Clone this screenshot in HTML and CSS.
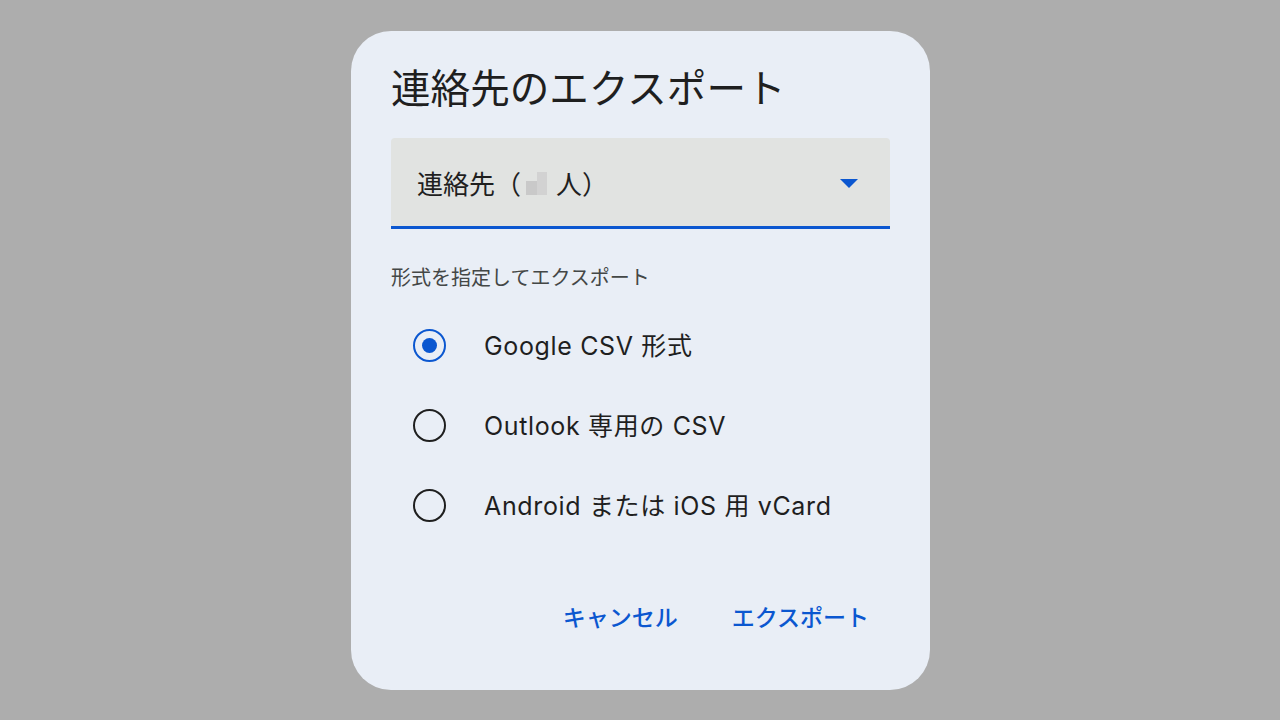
FILE: index.html
```html
<!DOCTYPE html>
<html lang="ja">
<head>
<meta charset="utf-8">
<link rel="stylesheet" href="styles.css">
</head>
<body>
<div class="stage">
  <div class="dialog">
    <h1 class="title">連絡先のエクスポート</h1>
    <div class="select">
      <span class="select-text">連絡先（<span class="redact"><span class="r1"></span><span class="r2"></span></span><span class="after">人）</span></span>
      <svg class="arrow" width="18" height="9" viewBox="0 0 18 9"><path d="M0 0 L18 0 L9 9 Z" fill="#0b57d0"/></svg>
    </div>
    <div class="label">形式を指定してエクスポート</div>
    <div class="options">
      <div class="option">
        <span class="radio checked"><span class="dot"></span></span>
        <span class="opt-text">Google CSV 形式</span>
      </div>
      <div class="option">
        <span class="radio"></span>
        <span class="opt-text">Outlook 専用の CSV</span>
      </div>
      <div class="option">
        <span class="radio"></span>
        <span class="opt-text">Android または iOS 用 vCard</span>
      </div>
    </div>
    <div class="actions">
      <button class="btn">キャンセル</button>
      <button class="btn">エクスポート</button>
    </div>
  </div>
</div>
</body>
</html>
```

FILE: styles.css
```css
html, body {
  margin: 0;
  padding: 0;
  width: 1280px;
  height: 720px;
  background: #adadad;
  font-family: Roboto, "Noto Sans CJK JP", sans-serif;
  overflow: hidden;
}
.stage {
  padding-top: 31px;
  padding-left: 351px;
}
.dialog {
  box-sizing: border-box;
  width: 579px;
  height: 659px;
  background: #e9eef6;
  border-radius: 40px;
  padding: 31px 40px 0 40px;
  display: flex;
  flex-direction: column;
}
.title {
  margin: 0;
  font-size: 39.6px;
  line-height: 56px;
  font-weight: 400;
  color: #1f1f1f;
}
.select {
  margin-top: 20px;
  height: 91px;
  box-sizing: border-box;
  background: #e1e3e1;
  border-bottom: 3px solid #0b57d0;
  border-radius: 4px 4px 0 0;
  display: flex;
  align-items: center;
  justify-content: space-between;
  padding: 0 32px 0 26px;
}
.select-text {
  font-size: 26px;
  color: #1f1f1f;
  display: flex;
  align-items: center;
}
.redact {
  display: inline-flex;
  align-items: flex-end;
  height: 23px;
  margin-left: 5px;
  margin-top: 2px;
}
.r1 {
  width: 11px;
  height: 14px;
  background: #c9c9c9;
}
.r2 {
  width: 10px;
  height: 23px;
  background: #d2d2d2;
}
.after {
  margin-left: 9px;
}
.arrow {
  display: block;
  margin-top: 3px;
}
.label {
  margin-top: 35px;
  font-size: 20px;
  line-height: 28px;
  color: #444746;
}
.options {
  margin-top: 13px;
  display: flex;
  flex-direction: column;
}
.option {
  height: 80px;
  display: flex;
  align-items: center;
}
.radio {
  box-sizing: border-box;
  width: 33px;
  height: 33px;
  margin-left: 22px;
  border: 2.5px solid #1f1f1f;
  border-radius: 50%;
  display: flex;
  align-items: center;
  justify-content: center;
}
.radio.checked {
  border-color: #0b57d0;
}
.dot {
  width: 15px;
  height: 15px;
  border-radius: 50%;
  background: #0b57d0;
}
.opt-text {
  margin-left: 38px;
  font-family: Inter, "Noto Sans CJK JP", sans-serif;
  font-size: 25px;
  letter-spacing: 0.65px;
  color: #1f1f1f;
  margin-bottom: 3px;
}
.actions {
  margin-top: 47px;
  display: flex;
  justify-content: flex-end;
  gap: 10px;
  margin-right: -1px;
}
.btn {
  height: 48px;
  padding: 0 22px;
  border: none;
  background: transparent;
  font-family: Roboto, "Noto Sans CJK JP", sans-serif;
  font-size: 23px;
  font-weight: 500;
  color: #0b57d0;
  border-radius: 24px;
}
```
